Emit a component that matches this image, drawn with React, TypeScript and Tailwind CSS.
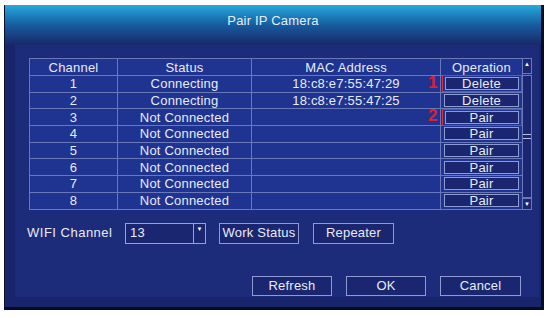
import React from "react";

const rows = [
  { ch: "1", status: "Connecting", mac: "18:c8:e7:55:47:29", op: "Delete", mark: "1" },
  { ch: "2", status: "Connecting", mac: "18:c8:e7:55:47:25", op: "Delete" },
  { ch: "3", status: "Not Connected", mac: "", op: "Pair", mark: "2" },
  { ch: "4", status: "Not Connected", mac: "", op: "Pair" },
  { ch: "5", status: "Not Connected", mac: "", op: "Pair" },
  { ch: "6", status: "Not Connected", mac: "", op: "Pair" },
  { ch: "7", status: "Not Connected", mac: "", op: "Pair" },
  { ch: "8", status: "Not Connected", mac: "", op: "Pair" },
];

function Btn({ label, className }: { label: string; className?: string }) {
  return (
    <div
      className={`flex items-center justify-center border border-[#8d9bd2] bg-[#1a2770] text-[13px] text-[#e8ebf5] ${className ?? ""}`}
    >
      {label}
    </div>
  );
}

export default function App() {
  return (
    <div
      className="w-[550px] h-[318px] bg-white pt-[5px] pl-[4px] tracking-[0.2px]"
      style={{ fontFamily: '"Liberation Sans", Arial, sans-serif' }}
    >
      <div className="w-[540px] h-[305px] flex flex-col bg-[#19256a] border-l border-[#0a1134] border-r-[3px] border-r-[#070b26] border-b-[3px] border-b-[#070b26]">
        {/* title bar */}
        <div className="h-[40px] shrink-0 bg-gradient-to-b from-[#26aadd] via-[#165c9e] to-[#172868] flex justify-center pt-[6px] text-[13px] text-[#e8ecf6]">
          Pair IP Camera
        </div>

        <div className="flex-1 pl-[10px] pr-[2px] pb-[10px]">
          <div className="h-full bg-[#1c2b7a] pl-[14px] pt-[13px] pr-[13px]">
            {/* table + scrollbar */}
            <div className="flex">
              <div className="grid grid-cols-[88px_134px_189px_82px] grid-rows-[17px_repeat(8,16.7px)] border-t border-l border-[#6878b8] bg-[#1f3391] text-[13px] text-[#e8ebf5]">
                {["Channel", "Status", "MAC Address", "Operation"].map((h) => (
                  <div key={h} className="flex items-center justify-center border-r border-b border-[#6878b8] leading-none">
                    {h}
                  </div>
                ))}
                {rows.map((r) => (
                  <React.Fragment key={r.ch}>
                    <div className="flex items-center justify-center border-r border-b border-[#6878b8] leading-none">{r.ch}</div>
                    <div className="flex items-center justify-center border-r border-b border-[#6878b8] leading-none">{r.status}</div>
                    <div className="flex items-center justify-center border-r border-b border-[#6878b8] leading-none">{r.mac}</div>
                    <div className="relative flex items-center justify-center border-r border-b border-[#6878b8]">
                      {r.mark ? (
                        <>
                          <span className="absolute left-[-13px] top-[-2px] text-[17px] font-bold text-[#e0202a] leading-none">
                            {r.mark}
                          </span>
                          <div className="w-[80px] h-[17px] flex items-center justify-center border border-[#d8303a]">
                            <Btn label={r.op} className="w-[74px] h-[13px] leading-none" />
                          </div>
                        </>
                      ) : (
                        <Btn label={r.op} className="w-[75px] h-[13px] leading-none" />
                      )}
                    </div>
                  </React.Fragment>
                ))}
              </div>

              {/* scrollbar */}
              <div className="w-[12px] flex flex-col -ml-[1px]">
                <div className="h-[16px] border border-[#6878b8] bg-[#1a2770] flex justify-center pt-[2px]">
                  <span className="text-[6px] leading-none text-white">▲</span>
                </div>
                <div className="flex-1 mt-[1px] border border-[#2e8ee2] bg-[#1a2770] flex items-center justify-center">
                  <div className="flex flex-col gap-[3px] w-[8px]">
                    <div className="h-[1px] bg-[#b8c2e6]" />
                    <div className="h-[1px] bg-[#b8c2e6]" />
                  </div>
                </div>
                <div className="h-[12px] border border-[#6878b8] bg-[#1a2770] flex justify-center items-center">
                  <span className="text-[6px] leading-none text-white">▼</span>
                </div>
              </div>
            </div>

            {/* wifi row */}
            <div className="flex items-center mt-[13px] -ml-[2px] text-[13px] text-[#e8ebf5]">
              <span className="w-[98px] tracking-[0.5px]">WIFI Channel</span>
              <div className="w-[81px] h-[21px] flex border border-[#98a2cc] bg-[#1a2770]">
                <span className="flex-1 pl-[4px] flex items-center">13</span>
                <div className="w-[12px] border-l border-[#98a2cc] flex justify-center pt-[2px]">
                  <span className="text-[6px] leading-none text-white">▼</span>
                </div>
              </div>
              <Btn label="Work Status" className="w-[80px] h-[21px] ml-[13px]" />
              <Btn label="Repeater" className="w-[81px] h-[21px] ml-[14px]" />
            </div>

            {/* footer buttons */}
            <div className="flex justify-end gap-[14px] mt-[32px] pr-[5px]">
              <Btn label="Refresh" className="w-[80px] h-[20px]" />
              <Btn label="OK" className="w-[80px] h-[20px]" />
              <Btn label="Cancel" className="w-[81px] h-[20px]" />
            </div>
          </div>
        </div>
      </div>
    </div>
  );
}
